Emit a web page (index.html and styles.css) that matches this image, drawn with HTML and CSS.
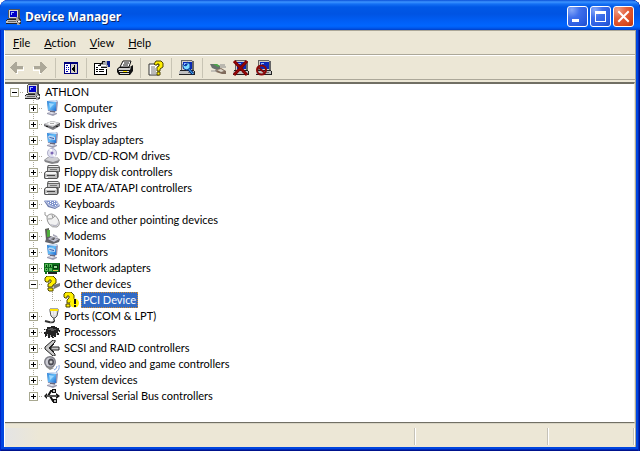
FILE: index.html
```html
<!DOCTYPE html>
<html lang="en">
<head>
<meta charset="utf-8">
<title>Device Manager</title>
<link rel="stylesheet" href="styles.css">
</head>
<body>
<svg class="sprite" aria-hidden="true">
  <defs>
    <linearGradient id="sky" x1="0" y1="0" x2="1" y2="1">
      <stop offset="0" stop-color="#2a84dc"/><stop offset=".5" stop-color="#64bcf8"/><stop offset="1" stop-color="#1c68cc"/>
    </linearGradient>
  </defs>
  <symbol id="pc" viewBox="0 0 16 16">
    <path d="M4 0h9v9H3V1z" fill="#d8d8d8"/>
    <path d="M3 0h9v1H3zM12 0h2v9h-2zM3 9h10v1H3zM2 1h1v8H2z" fill="#555"/>
    <path d="M4 2h7v6H4z" fill="#0000c8"/>
    <path d="M5 3h3v1H5zM5 4h1v2H5z" fill="#9fb8ff"/>
    <path d="M1 11h12v3H0v-2z" fill="#c0c0c0"/>
    <path d="M1 10h12v1H1zM0 11h1v1H0zM0 14h11v1H0z" fill="#222"/>
    <path d="M2 12h8v1H2z" fill="#666"/>
    <path d="M10 8h2v2h1v1h2v3h-1v2h-3v-3h1v-1h-2z" fill="#a0a0a0"/>
    <path d="M13 9h1v1h1v2h-1v-1h-1zM11 12h1v1h-1zM14 13h1v2h-2v-1h1z" fill="#333"/>
    <path d="M12 12h2v1h-2z" fill="#fff"/>
  </symbol>
  <symbol id="monitor" viewBox="0 0 16 16">
    <path d="M3 1l10-1 1 2-1 9-3 1-6-1z" fill="#9494b4"/>
    <path d="M3 1l9 1v9l-8-1z" fill="url(#sky)"/>
    <path d="M3 1l9 1 2-1-3-1z" fill="#d4e8fc"/>
    <path d="M5 3l5 1-4 4z" fill="#9cd8ff"/>
    <path d="M6 11l5 0v2H6z" fill="#68687c"/>
    <path d="M3 13l3-1 7 1v1l-4 2-6-2z" fill="#9c9cb0"/>
    <path d="M4 13l3-1 5 1-4 1z" fill="#e4e4ee"/>
  </symbol>
  <symbol id="display" viewBox="0 0 16 16">
    <use href="#monitor"/>
    <path d="M4 4l7 1v3L5 7z" fill="#c8d4ec"/><path d="M5 5l5 1v1L6 6z" fill="#1c50a8"/>
  </symbol>
  <symbol id="disk" viewBox="0 0 16 16">
    <path d="M0 8l8-3 8 2v3l-7 4-9-4z" fill="#77777c"/>
    <path d="M0 8l8-3 8 2-7 4z" fill="#d4d4d6"/>
    <ellipse cx="8" cy="7.500" rx="4" ry="1.500" fill="#f8f8f8"/>
    <path d="M6 7h4v1H6z" fill="#aaa"/>
    <path d="M9 11l7-4v1l-7 4z" fill="#555"/>
    <path d="M2 10h2v1H2zM12 10h2v1h-2z" fill="#222"/>
  </symbol>
  <symbol id="disc" viewBox="0 0 16 16">
    <path d="M0 12l4-3h9l3 3-2 3-6 1-7-2z" fill="#848488"/>
    <path d="M1 12l4-3h8l2 3-6 2z" fill="#cfcfd4"/>
    <circle cx="8" cy="5" r="5" fill="#e0e0f0"/>
    <circle cx="8" cy="5" r="4.500" fill="none" stroke="#b0b0c8"/>
    <path d="M8 5L5 1h3zM8 5l4 3-2 1z" fill="#fff"/>
    <circle cx="8" cy="5" r="1.500" fill="#7a64b4"/>
  </symbol>
  <symbol id="drive" viewBox="0 0 16 16">
    <path d="M4 1h10l2 2v5H3V3z" fill="#666"/><path d="M5 2h9l1 1H4z" fill="#eee"/><path d="M4 4h11v3H4z" fill="#c4c4c4"/>
    <path d="M2 7h11l1 1v6l-1 1H1l-1-1V9z" fill="#555"/><path d="M2 8h10l1 2H1z" fill="#f4f4f4"/><path d="M1 10h12v4H1z" fill="#bcbcbc"/>
    <path d="M3 11h8v1H3z" fill="#444"/><path d="M6 5h7v1H6z" fill="#777"/><path d="M2 13h2v1H2z" fill="#fff"/>
    <path d="M14 7l1 1v5l-1 1z" fill="#888"/>
  </symbol>
  <symbol id="keyboard" viewBox="0 0 16 16">
    <path d="M0 5l13 0 3 5-5 3-7-2z" fill="#6c7cac"/>
    <path d="M0 4l12 0 4 5-5 3-6-2z" fill="#c0cae8"/>
    <path d="M2 5l10 0 2 4-3 2-5-2z" fill="#8094cc"/>
    <path d="M4 6h1v1H4zM6 5h1v1H6zM6 7h1v1H6zM8 6h1v1H8zM10 5h1v1h-1zM10 7h1v1h-1zM12 7h1v1h-1zM8 8h1v1H8zM11 9h1v1h-1z" fill="#fff"/>
  </symbol>
  <symbol id="mouse" viewBox="0 0 16 16">
    <path d="M1 0v3l3 2" fill="none" stroke="#999"/>
    <path d="M3 6q0-4 5-4 4 1 6 5 3 6-1 8-5 1-8-3-2-3-2-6z" fill="#f2f2f2" stroke="#949494"/>
    <path d="M4 7q4 1 7-3M8 3l1 3" fill="none" stroke="#999"/>
    <path d="M6 12q3 3 7 2 2-2 1-5 0 4-3 4z" fill="#b8b8c4"/>
  </symbol>
  <symbol id="modem" viewBox="0 0 16 16">
    <path d="M1 1l4-1v10L2 12z" fill="#5c6056"/><path d="M3 2h3v7H3z" fill="#4fae3c"/>
    <path d="M2 11l4-3 10 3-1 3-6 2-8-2z" fill="#64646c"/>
    <path d="M4 11l3-2 8 2-5 3z" fill="#c0c0d0"/>
    <path d="M6 11l5-1-1 2z" fill="#444"/><path d="M9 6l4 2 1 2-5-2z" fill="#a8a8b8"/>
  </symbol>
  <symbol id="network" viewBox="0 0 16 16" shape-rendering="crispEdges">
    <path d="M0 3h16v9H3v2H1v-2H0z" fill="#0e6e1c"/>
    <path d="M1 4h3v3H1zM5 4h3v3H5zM1 8h3v3H1zM5 8h3v3H5z" fill="#58b858"/>
    <path d="M2 5h1v2H2zM6 5h1v2H6zM9 5h5v4H9zM2 9h1v1H2z" fill="#033c0c"/>
    <path d="M10 6h3v2h-3z" fill="#9ad89a"/><path d="M9 10h5v1H9z" fill="#e0c840"/>
    <path d="M4 12h9v2H4zM15 4h1v8h-1z" fill="#222"/>
  </symbol>
  <symbol id="question" viewBox="0 0 16 16">
    <path d="M9 9l7-2v3l-6 3z" fill="#777"/>
    <path d="M1 5V2l2-2h6l3 3v4l-3 2-1 2H4V8l3-2V4H5v2H2z" fill="#fff000" stroke="#4c4400"/>
    <path d="M4 12h5v3H5l-1-1z" fill="#fff000" stroke="#4c4400"/>
  </symbol>
  <symbol id="unknown" viewBox="0 0 16 16">
    <path d="M1 5V2l2-2h5l3 3v4l-3 2-1 2H4V8l2-2V4H4v2H2z" fill="#fff000" stroke="#4c4400"/>
    <path d="M3 12h4v3H3z" fill="#fff000" stroke="#4c4400"/>
    <circle cx="11.500" cy="11" r="4.500" fill="#fff200"/>
    <path d="M11 7h2v5h-2zM11 13h2v2h-2z" fill="#111"/>
  </symbol>
  <symbol id="port" viewBox="0 0 16 16">
    <path d="M6 1h8v2l-1 5-2 2H9L7 8 6 3z" fill="#ddd" stroke="#555"/>
    <path d="M6 1h8v2H6z" fill="#ffe400"/><path d="M8 3v4M11 3v4" stroke="#fff"/>
    <path d="M10 10v3q-1 2-5 1l-4-1" fill="none" stroke="#333" stroke-width="2"/>
    <path d="M10 10v2q-1 2-4 2" fill="none" stroke="#bbb"/>
  </symbol>
  <symbol id="chip" viewBox="0 0 16 16" shape-rendering="crispEdges">
    <path d="M7 2h4v1h2v1h2v2h1v2h-2v1h1v2h-3v2h-2v1H8v-1H6v1H4v-2H2v1H1v-3H0V8h2V6H0V5h3V3h4z" fill="#222"/>
    <path d="M6 4h3v1h3v1h-2v1H7V6H4V5h2z" fill="#555"/>
    <path d="M1 7h1v1H1zM3 10h1v2H3zM6 11h1v2H6zM9 12h1v1H9zM12 9h1v2h-1zM14 7h1v1h-1zM1 5h1v1H1z" fill="#bbb"/>
  </symbol>
  <symbol id="scsi" viewBox="0 0 16 16">
    <path d="M9 0h2v2L5 8l6 6v2H9L1 9V7z" fill="#c8c8c8" stroke="#222"/>
    <path d="M10 4L6 8l4 4" fill="none" stroke="#222"/>
    <path d="M7 7h8v3H7z" fill="#c8c8c8" stroke="#222"/>
  </symbol>
  <symbol id="sound" viewBox="0 0 16 16">
    <ellipse cx="6" cy="6" rx="6" ry="6" fill="#7c7c84"/><ellipse cx="6" cy="6" rx="4.500" ry="4.500" fill="#cacad2"/>
    <ellipse cx="7" cy="6" rx="3" ry="3.500" fill="#4c4c54"/><circle cx="7" cy="6" r="1.500" fill="#ccc"/>
    <path d="M2 11l4 3 4-2-2-1z" fill="#888"/>
    <path d="M10 14q3-1 3-4M12 16q4-2 3-7" fill="none" stroke="#86a8e0"/>
  </symbol>
  <symbol id="usb" viewBox="0 0 16 16">
    <path d="M0 8l3-3v2h9V5l4 3-4 3V9H3v2z" fill="#111"/>
    <path d="M4 8l3-5h2M6 8l3 5h2" fill="none" stroke="#111" stroke-width="2"/>
    <path d="M8 1h4v4H8zM9 11h4v4H9z" fill="#111"/><path d="M9 2h2v2H9zM10 12h2v2h-2z" fill="#bbb"/><path d="M2 8h11" stroke="#999"/>
  </symbol>
  <symbol id="back" viewBox="0 0 16 16" shape-rendering="crispEdges">
    <path d="M2 8h1v1h1v1h1v1h1v1h1v1h1v-3h6V7h1v4H9v3H7v-1H6v-1H5v-1H4v-1H3V9H2z" fill="#fff"/>
    <path d="M1 7h1V6h1V5h1V4h1V3h1V2h2v4h6v3H8v4H6v-1H5v-1H4v-1H3V9H2V8H1z" fill="#aca899"/>
  </symbol>
  <symbol id="tree" viewBox="0 0 16 16" shape-rendering="crispEdges">
    <path d="M1 2h14v12H1z" fill="#fff"/><path d="M1 2h14v2H1zM1 4h1v10H1zM14 4h1v10h-1zM1 13h14v1H1zM7 4h1v9H7z" fill="#00007c"/>
    <path d="M8 4h6v9H8z" fill="#d4d0c8"/><path d="M3 5h2v1H3zM3 7h1v1H3zM5 7h1v1H5zM3 9h1v1H3zM5 9h1v1H5zM3 11h2v1H3z" fill="#0000b0"/>
    <path d="M12 5v7h-1v-1h-1v-1H9V8h1V7h1V5z" fill="#000"/>
  </symbol>
  <symbol id="props" viewBox="0 0 18 16" shape-rendering="crispEdges">
    <path d="M1 4h13v11H1z" fill="#fff"/><path d="M1 3h7v1H1zM1 4h1v11H1zM1 14h13v1H1zM13 9h1v6h-1z" fill="#000"/>
    <path d="M3 7h2v1H3zM3 9h2v1H3zM3 11h2v1H3zM6 9h5v1H6zM6 11h5v1H6z" fill="#000"/>
    <path d="M6 4h2V2h2V1h4v1h1v5h-3v1h-2V7H8V6H6z" fill="#aaa"/>
    <path d="M5 5h2V3h2V1h3v1h-2v2H8v2H5zM8 7h6v1H8z" fill="#111"/><path d="M14 1h3v6h-2V5h-1z" fill="#0a1c8c"/><path d="M8 5h5v1H8z" fill="#fff"/>
  </symbol>
  <symbol id="print" viewBox="0 0 16 16">
    <path d="M6 1h8l-2 6H3z" fill="#fff" stroke="#111"/>
    <path d="M7 3h5M6 5h5" stroke="#111"/>
    <path d="M2 7h11l3-2v6l-3 4H2l-2-3V9z" fill="#111"/>
    <path d="M2 8h10l2-1-1 3H1z" fill="#ccc"/><path d="M2 11h10v1H2zM3 13h9v1H3z" fill="#ddd"/><path d="M6 11h4v1H6z" fill="#ffe600"/>
  </symbol>
  <symbol id="help" viewBox="0 0 16 16">
    <path d="M1 4h10v11H1z" fill="#fff" stroke="#333"/>
    <path d="M3 7h4M3 9h5M3 11h5M3 13h5" stroke="#777"/>
    <path d="M6 4l2-3h5l2 2v4l-3 2v2H9V7l2-1V4H9v1H7z" fill="#ffee00" stroke="#4c4400"/>
    <path d="M9 12h3v3H9z" fill="#ffee00" stroke="#4c4400"/>
  </symbol>
  <symbol id="bigpc" viewBox="0 0 16 16" shape-rendering="crispEdges">
    <path d="M2 0h12v10H2z" fill="#d4d0c8"/><path d="M2 0h11v1H2zM2 0h1v10H2zM13 1h2v10h-2z" fill="#666"/>
    <path d="M4 2h9v7H4z" fill="#0828b8"/><path d="M5 3h3v1H5zM5 4h1v1H5z" fill="#8cb4ff"/>
    <path d="M0 11h15v3H0z" fill="#c0c0c0"/><path d="M1 10h14v1H1zM0 14h15v1H0zM15 11h1v4h-1z" fill="#222"/><path d="M9 12h4v1H9z" fill="#777"/>
  </symbol>
  <symbol id="scan" viewBox="0 0 16 16">
    <use href="#bigpc"/>
    <path d="M8 7l6 7" stroke="#062a80" stroke-width="3"/><path d="M8 7l6 7" stroke="#48c8f8"/>
    <path d="M4 4l2 2 2-1V2l3 2v4l-3 2-3-1-1-2z" fill="#7cdcff" stroke="#0c3c98"/>
  </symbol>
  <symbol id="plug" viewBox="0 0 16 16">
    <path d="M0 4h6l4 2v3l-3 1-5-2z" fill="#68706c"/><path d="M3 4h4l3 2-2 1z" fill="#4ca848"/>
    <path d="M10 5h5M10 7h6" stroke="#888"/>
    <path d="M5 10l6-2 5 3v3h-4l-6-2z" fill="#806c5c"/><path d="M7 10l4-1 3 2-3 1z" fill="#ddd8cc"/><path d="M1 11h6" stroke="#999"/>
  </symbol>
  <symbol id="remove" viewBox="0 0 16 16">
    <use href="#bigpc"/><path d="M1 1l13 14M14 1L1 15" stroke="#7c0000" stroke-width="3"/><path d="M1 1l13 14M14 1L1 15" stroke="#a00808"/>
  </symbol>
  <symbol id="disable" viewBox="0 0 16 16">
    <use href="#bigpc"/><circle cx="5.500" cy="10" r="4.500" fill="none" stroke="#880808" stroke-width="2"/><path d="M2 7l7 6" stroke="#880808" stroke-width="2"/>
  </symbol>
</svg>

<main class="window">
  <header class="titlebar">
    <svg class="icon" aria-hidden="true"><use href="#pc"/></svg>
    <h1>Device Manager</h1>
    <div class="captions">
      <button class="caption" aria-label="Minimize"><svg viewBox="0 0 19 19"><path d="M4 12h7v3H4z" fill="#fff"/></svg></button>
      <button class="caption" aria-label="Maximize"><svg viewBox="0 0 19 19"><path d="M4 4h11v11H4zM5 7v7h9V7z" fill="#fff" fill-rule="evenodd"/></svg></button>
      <button class="caption close" aria-label="Close"><svg viewBox="0 0 19 19"><path d="M5 5l9 9M14 5l-9 9" stroke="#fff" stroke-width="2" stroke-linecap="square"/></svg></button>
    </div>
  </header>

  <div class="client">
    <nav class="menubar" aria-label="Menu">
      <button><u>F</u>ile</button>
      <button><u>A</u>ction</button>
      <button><u>V</u>iew</button>
      <button><u>H</u>elp</button>
    </nav>

    <div class="toolbar" role="toolbar" aria-label="Standard">
      <button disabled aria-label="Back"><svg class="icon"><use href="#back"/></svg></button>
      <button disabled aria-label="Forward"><svg class="icon flip"><use href="#back"/></svg></button>
      <span class="sep"></span>
      <button aria-label="Show/Hide Console Tree"><svg class="icon"><use href="#tree"/></svg></button>
      <span class="sep"></span>
      <button aria-label="Properties"><svg class="icon wide"><use href="#props"/></svg></button>
      <button aria-label="Print"><svg class="icon"><use href="#print"/></svg></button>
      <span class="sep"></span>
      <button aria-label="Help"><svg class="icon"><use href="#help"/></svg></button>
      <span class="sep"></span>
      <button aria-label="Scan for hardware changes"><svg class="icon"><use href="#scan"/></svg></button>
      <span class="sep"></span>
      <button aria-label="Update Driver"><svg class="icon"><use href="#plug"/></svg></button>
      <button aria-label="Uninstall"><svg class="icon"><use href="#remove"/></svg></button>
      <button aria-label="Disable"><svg class="icon"><use href="#disable"/></svg></button>
    </div>

    <div class="pane">
      <ul class="tree">
        <li>
          <div class="row"><span class="branch root"><button class="toggle open" aria-label="Collapse"></button></span><svg class="icon"><use href="#pc"/></svg><span class="label">ATHLON</span></div>
          <ul>
            <li><div class="row"><span class="branch"><button class="toggle" aria-label="Expand"></button></span><svg class="icon"><use href="#monitor"/></svg><span class="label">Computer</span></div></li>
            <li><div class="row"><span class="branch"><button class="toggle" aria-label="Expand"></button></span><svg class="icon"><use href="#disk"/></svg><span class="label">Disk drives</span></div></li>
            <li><div class="row"><span class="branch"><button class="toggle" aria-label="Expand"></button></span><svg class="icon"><use href="#display"/></svg><span class="label">Display adapters</span></div></li>
            <li><div class="row"><span class="branch"><button class="toggle" aria-label="Expand"></button></span><svg class="icon"><use href="#disc"/></svg><span class="label">DVD/CD-ROM drives</span></div></li>
            <li><div class="row"><span class="branch"><button class="toggle" aria-label="Expand"></button></span><svg class="icon"><use href="#drive"/></svg><span class="label">Floppy disk controllers</span></div></li>
            <li><div class="row"><span class="branch"><button class="toggle" aria-label="Expand"></button></span><svg class="icon"><use href="#drive"/></svg><span class="label">IDE ATA/ATAPI controllers</span></div></li>
            <li><div class="row"><span class="branch"><button class="toggle" aria-label="Expand"></button></span><svg class="icon"><use href="#keyboard"/></svg><span class="label">Keyboards</span></div></li>
            <li><div class="row"><span class="branch"><button class="toggle" aria-label="Expand"></button></span><svg class="icon"><use href="#mouse"/></svg><span class="label">Mice and other pointing devices</span></div></li>
            <li><div class="row"><span class="branch"><button class="toggle" aria-label="Expand"></button></span><svg class="icon"><use href="#modem"/></svg><span class="label">Modems</span></div></li>
            <li><div class="row"><span class="branch"><button class="toggle" aria-label="Expand"></button></span><svg class="icon"><use href="#display"/></svg><span class="label">Monitors</span></div></li>
            <li><div class="row"><span class="branch"><button class="toggle" aria-label="Expand"></button></span><svg class="icon"><use href="#network"/></svg><span class="label">Network adapters</span></div></li>
            <li>
              <div class="row"><span class="branch"><button class="toggle open" aria-label="Collapse"></button></span><svg class="icon"><use href="#question"/></svg><span class="label">Other devices</span></div>
              <ul class="guide">
                <li><div class="row"><span class="branch"></span><svg class="icon"><use href="#unknown"/></svg><span class="label selected">PCI Device</span></div></li>
              </ul>
            </li>
            <li><div class="row"><span class="branch"><button class="toggle" aria-label="Expand"></button></span><svg class="icon"><use href="#port"/></svg><span class="label">Ports (COM &amp; LPT)</span></div></li>
            <li><div class="row"><span class="branch"><button class="toggle" aria-label="Expand"></button></span><svg class="icon"><use href="#chip"/></svg><span class="label">Processors</span></div></li>
            <li><div class="row"><span class="branch"><button class="toggle" aria-label="Expand"></button></span><svg class="icon"><use href="#scsi"/></svg><span class="label">SCSI and RAID controllers</span></div></li>
            <li><div class="row"><span class="branch"><button class="toggle" aria-label="Expand"></button></span><svg class="icon"><use href="#sound"/></svg><span class="label">Sound, video and game controllers</span></div></li>
            <li><div class="row"><span class="branch"><button class="toggle" aria-label="Expand"></button></span><svg class="icon"><use href="#monitor"/></svg><span class="label">System devices</span></div></li>
            <li><div class="row"><span class="branch"><button class="toggle" aria-label="Expand"></button></span><svg class="icon"><use href="#usb"/></svg><span class="label">Universal Serial Bus controllers</span></div></li>
          </ul>
        </li>
      </ul>
    </div>

    <footer class="statusbar"><span class="main"></span><span class="mid"></span><span class="end"></span></footer>
  </div>
</main>
</body>
</html>
```
FILE: styles.css
```css
:root {
  --face: #ece7d6;
  --shadow: #aca899;
}

* { box-sizing: border-box; }

body {
  margin: 0;
  background: #fff;
  color: #000;
  font: 11px/16px Lato, "Noto Sans", sans-serif;
  font-variant-ligatures: none;
}

button {
  margin: 0;
  padding: 0;
  border: 0;
  background: none;
  color: inherit;
  font: inherit;
}

ul { margin: 0; padding: 0; list-style: none; }

.sprite { position: absolute; width: 0; height: 0; }

.icon { flex: none; width: 16px; height: 16px; }
.icon.wide { width: 18px; }
.icon.flip { transform: scaleX(-1); }

.window {
  display: flex;
  flex-direction: column;
  min-height: 100vh;
  padding: 0 4px 4px;
  border-radius: 8px 8px 0 0;
  background: #0046e0;
  box-shadow: inset 1px 0 #0024c8, inset -1px 0 #00138c, inset -2px 0 #0029b8, inset 0 -1px #00138c, inset 0 -2px #0029b8;
  overflow: hidden;
}

.titlebar {
  display: flex;
  align-items: center;
  height: 30px;
  margin: 0 -4px;
  padding: 3px 6px 0;
  border-radius: 8px 8px 0 0;
  background: linear-gradient(180deg, #0a50d8 0, #3c94ff 2px, #1470f4 4px, #0058e6 7px, #0054e3 14px, #0060f8 22px, #0066ff 26px, #0058ee 28px, #0040c8 30px);
}

h1 {
  flex: 1;
  margin: 0 0 0 3px;
  color: #fff;
  font: bold 12px/16px "Noto Sans", sans-serif;
  text-shadow: 1px 1px #0a246a;
}

.captions { display: flex; gap: 2px; }

.caption {
  width: 21px;
  height: 21px;
  border: 1px solid #fff;
  border-radius: 3px;
  background: radial-gradient(circle at 20% 15%, #86a8f8 0, #4070ec 35%, #2a5ce0 75%, #1e4cc8 100%);
}
.caption svg { display: block; width: 19px; height: 19px; }
.close { background: radial-gradient(circle at 20% 15%, #f0a088 0, #e4603c 40%, #d8481c 75%, #b83410 100%); }

.client {
  display: flex;
  flex: 1;
  flex-direction: column;
  border: 1px solid var(--shadow);
  border-width: 1px 1px 0 1px;
  border-left-color: #fff;
  background: var(--face);
}

.menubar {
  display: flex;
  height: 24px;
  padding-left: 1px;
  border-bottom: 1px solid var(--shadow);
}
.menubar button { padding: 0 7px; }
.menubar u { text-underline-offset: 1px; }

.toolbar {
  display: flex;
  align-items: center;
  height: 25px;
  padding-top: 1px;
  border-top: 1px solid #fff;
  border-bottom: 1px solid var(--shadow);
}
.toolbar button {
  display: flex;
  align-items: center;
  justify-content: center;
  width: 23px;
  height: 22px;
}
.sep { width: 1px; height: 20px; margin: 0 3px 0 4px; background: #c8c4b4; }

.pane {
  flex: 1;
  margin-top: 2px;
  border: 1px solid #716f64;
  border-top-width: 2px;
  border-right-color: var(--face);
  border-left: 0;
  background: #fff;
}

.row { display: flex; align-items: center; height: 16px; }
.row .icon { margin-left: 1px; }

.branch {
  display: flex;
  flex: none;
  align-items: center;
  justify-content: center;
  align-self: stretch;
  width: 19px;
  background:
    repeating-linear-gradient(90deg, var(--shadow) 0 1px, transparent 1px 2px) 9px 8px / 10px 1px no-repeat,
    repeating-linear-gradient(180deg, var(--shadow) 0 1px, transparent 1px 2px) 9px 0 / 1px 16px no-repeat;
}
.branch.root { background-size: 10px 1px, 0 0; }
.tree ul { padding-left: 19px; }
.tree li:last-child > .row > .branch:not(.root) { background-size: 10px 1px, 1px 9px; }
.guide { background: repeating-linear-gradient(180deg, var(--shadow) 0 1px, transparent 1px 2px) 9px 0 / 1px 100% no-repeat; }

.toggle {
  width: 9px;
  height: 9px;
  border: 1px solid #a8a890;
  background:
    linear-gradient(#000, #000) center / 5px 1px no-repeat,
    linear-gradient(#000, #000) center / 1px 5px no-repeat,
    #fff;
}
.toggle.open { background: linear-gradient(#000, #000) center / 5px 1px no-repeat, #fff; }

.label { margin-left: 2px; padding: 0 2px; white-space: nowrap; }
.selected {
  outline: 1px dotted #d08a30;
  outline-offset: -1px;
  background: #316ac5;
  color: #fff;
}

.statusbar {
  display: flex;
  height: 24px;
  padding: 4px 0 2px;
  border-top: 1px solid #d8d4c4;
}
.statusbar span { border-right: 1px solid #fff; box-shadow: inset -1px 0 #c5c2b8; }
.main { flex: 1; background: linear-gradient(90deg, #e4e4e4, var(--face) 34px); }
.mid { width: 133px; }
.end { width: 86px; }
```
